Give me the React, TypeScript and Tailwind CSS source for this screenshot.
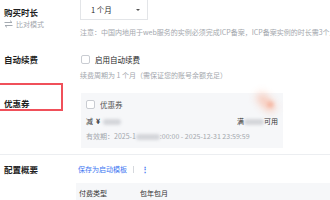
import React from "react";

const font = { fontFamily: '"Noto Sans CJK SC", "Noto Sans", sans-serif' };

function Check() {
  return <span className="inline-block size-[9px] shrink-0 rounded-[2px] border border-[#c9ccd2] bg-white" />;
}

function Blur({ w }: { w: string }) {
  return <span className={`inline-block h-[6px] rounded-full bg-[#d4d6da] blur-[1.5px] ${w}`} />;
}

function SwapIcon() {
  return (
    <svg width="9" height="8" viewBox="0 0 9 8" fill="none" stroke="#9aa0a8" strokeWidth="0.9">
      <path d="M0.5 2.5h7.5M6 0.6l2 1.9" />
      <path d="M8.5 5.5H1M3 7.4L1 5.5" />
    </svg>
  );
}

export default function App() {
  return (
    <div style={font} className="relative h-[200px] w-[330px] overflow-hidden bg-white text-[#1f1f1f]">
      {/* 购买时长 */}
      <div className="flex">
        <div className="w-[80px] shrink-0 pl-[4px]">
          <div className="mt-[6px] text-[8.5px] font-semibold leading-[12px]">购买时长</div>
          <div className="mt-[1px] flex items-center gap-[3px] text-[7px] leading-[10px] text-[#a3a7ad]">
            <SwapIcon />
            <span>比对模式</span>
          </div>
        </div>
        <div className="min-w-0 flex-1">
          <div className="flex h-[20px] w-[68px] items-center justify-between border border-t-0 border-[#e3e5e8] bg-white pl-[10px] pr-[7px] text-[7.5px]">
            <span>1 个月</span>
            <span className="h-0 w-0 border-x-[2px] border-t-[2.5px] border-x-transparent border-t-[#555]" />
          </div>
          <div className="mt-[8px] whitespace-nowrap text-[7px] leading-[9px] text-[#a3a7ad]">
            注意：中国内地用于web服务的实例必须完成ICP备案，ICP备案实例的时长需3个月及以上
          </div>
        </div>
      </div>

      {/* 自动续费 */}
      <div className="mt-[18px] flex h-[9px] items-center">
        <div className="w-[80px] shrink-0 pl-[4px] text-[8.5px] font-semibold leading-none">自动续费</div>
        <div className="flex items-center gap-[5px] pl-[1px] text-[7.5px] leading-none">
          <Check />
          <span>启用自动续费</span>
        </div>
      </div>
      <div className="mt-[7px] pl-[80px] text-[7px] leading-[9px] text-[#a3a7ad]">
        续费周期为 1 个月（需保证您的账号余额充足）
      </div>

      {/* 优惠券 */}
      <div className="relative mt-[13px] flex">
        <div className="w-[81px] shrink-0 pl-[4px] pt-[5px] text-[8.5px] font-semibold leading-[10px]">优惠券</div>
        <div className="relative h-[55px] w-[202px] bg-[#f6f7f9] px-[5px] pt-[7px]">
          <div className="flex items-center gap-[5px] text-[7.5px] leading-none text-[#555]">
            <Check />
            <span>优惠券</span>
          </div>
          <div className="mt-[8px] flex items-center justify-between text-[7px] leading-[9px] text-[#333]">
            <div className="flex items-center gap-[3px]">
              <span>减</span>
              <span className="font-semibold">¥</span>
              <Blur w="w-[18px]" />
            </div>
            <div className="flex items-center">
              <span>满</span>
              <Blur w="w-[20px]" />
              <span>可用</span>
            </div>
          </div>
          <div className="mt-[6px] flex items-center whitespace-nowrap text-[7px] leading-[9px] text-[#a3a7ad]">
            <span>有效期：2025-1</span>
            <Blur w="w-[24px]" />
            <span>:00:00 - 2025-12-31 23:59:59</span>
          </div>
          <span className="absolute right-[6px] top-[5px] h-[9px] w-[22px] rotate-45 rounded-full bg-[#f9a283] opacity-60 blur-[4px]" />
          <span className="absolute right-[10px] top-[9px] size-[5px] rounded-full bg-[#f58a66] opacity-70 blur-[2px]" />
        </div>
        <div className="absolute left-[-3px] top-[-10px] h-[28px] w-[66px] border-2 border-[#f0505a]" />
      </div>

      <div className="mt-[6px] border-t border-[#eceef1]" />

      {/* 配置概要 */}
      <div className="mt-[8px] flex h-[12px] items-center">
        <div className="w-[78px] shrink-0 pl-[4px] text-[8.5px] font-semibold leading-none">配置概要</div>
        <div className="flex items-center text-[7px] leading-none text-[#3d76f2]">
          <span>保存为启动模板</span>
          <span className="ml-[6px] h-[7px] w-px bg-[#d5d8dd]" />
          <span className="ml-[7px] text-[8px] font-bold">⋮</span>
        </div>
      </div>
      <div className="ml-[76px] mt-[8px] flex h-[20px] items-center bg-[#f6f7f9] pl-[3px] text-[7px] text-[#333]">
        <span className="w-[61px]">付费类型</span>
        <span>包年包月</span>
      </div>
    </div>
  );
}
